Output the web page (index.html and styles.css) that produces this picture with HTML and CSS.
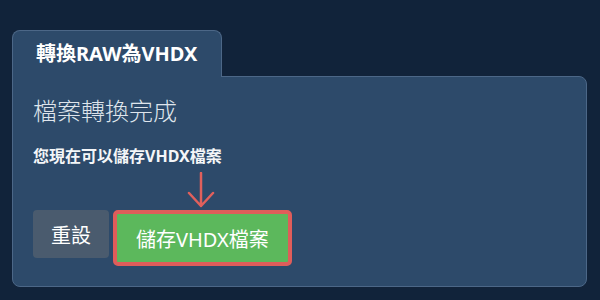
FILE: index.html
```html
<!DOCTYPE html>
<html lang="zh-Hant">
<head>
    <meta charset="UTF-8">
    <meta name="viewport" content="width=device-width, initial-scale=1.0">
    <title>轉換RAW為VHDX</title>
    <link rel="stylesheet" href="styles.css">
</head>
<body>
    <div class="page">
        <div class="tabs">
            <div class="tab">轉換RAW為VHDX</div>
        </div>
        <div class="panel">
            <h2 class="panel-title">檔案轉換完成</h2>
            <p class="panel-text">您現在可以儲存VHDX檔案</p>
            <div class="actions">
                <button type="button" class="btn btn-reset">重設</button>
                <span class="save-wrap">
                    <!-- Hinweis-Pfeil auf den Speichern-Button -->
                    <svg class="hint-arrow" width="30" height="36" viewBox="0 0 30 36">
                        <path d="M15 1 L15 34 M3 21 L15 34 L27 21" fill="none" stroke="#e0605c" stroke-width="2.5" stroke-linecap="round" stroke-linejoin="round"/>
                    </svg>
                    <button type="button" class="btn btn-save">儲存VHDX檔案</button>
                </span>
            </div>
        </div>
    </div>
</body>
</html>
```

FILE: styles.css
```css
/* Grund-Layout */
body {
    margin: 0;
    background-color: #11233a;
    font-family: "Noto Sans", "Noto Sans CJK TC", sans-serif;
    color: #fff;
}

.page {
    padding: 30px 13px 0 12px;
}

.tabs {
    display: flex;
}

.tab {
    position: relative;
    z-index: 1;
    height: 45px;
    line-height: 45px;
    padding: 0 22px 1px 23px;
    margin-bottom: -1px;
    width: 163px;
    background-color: #2d4a6a;
    border: 1px solid #4c6787;
    border-bottom: none;
    border-radius: 8px 8px 0 0;
    font-size: 20px;
    font-weight: bold;
}

.panel {
    background-color: #2d4a6a;
    border: 1px solid #4c6787;
    border-radius: 0 8px 8px 8px;
    padding: 18px 20px 20px 20px;
}

.panel-title {
    margin: 0;
    font-size: 24px;
    line-height: 32px;
    font-weight: 300;
    color: #dfe5ec;
}

.panel-text {
    margin: 17px 0 0 0;
    font-size: 16px;
    line-height: 24px;
    font-weight: bold;
    color: #f4f6f8;
}

.actions {
    display: flex;
    align-items: flex-start;
    gap: 4px;
    margin-top: 42px;
}

.btn {
    font-family: inherit;
    font-size: 20px;
    height: 48px;
    padding: 0 18px;
    color: #fff;
    border: none;
    border-radius: 4px;
    cursor: pointer;
}

.btn-reset {
    background-color: #4a5b6e;
}

.save-wrap {
    position: relative;
    display: block;
}

.btn-save {
    display: block;
    height: 56px;
    padding: 0 19px;
    background-color: #5cb85c;
    border: 4px solid #df5d5a;
    border-radius: 5px;
}

.hint-arrow {
    position: absolute;
    left: 50%;
    bottom: 100%;
    margin-left: -16px;
    margin-bottom: 2px;
}
```
